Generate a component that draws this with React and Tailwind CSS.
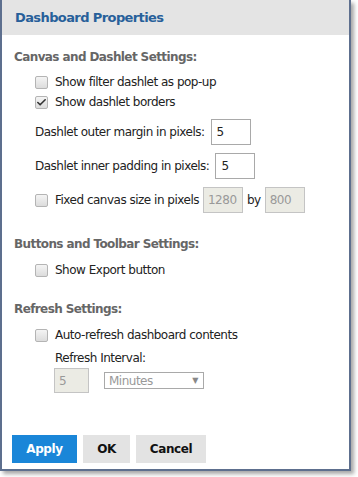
import { Check } from 'lucide-react';

const font = { fontFamily: '"DejaVu Sans", Tahoma, sans-serif' };

const Box = ({ checked }) => (
  <span className="w-[13px] h-[13px] rounded-[2px] border border-[#b4b4b4] bg-gradient-to-b from-[#f4f4f4] to-[#dcdcdc] flex items-center justify-center shrink-0">
    {checked && <Check size={11} strokeWidth={3.5} className="text-[#333]" />}
  </span>
);

const CheckRow = ({ label, checked, className = '' }) => (
  <div className={`flex items-center h-[20px] pl-[33px] ${className}`}>
    <Box checked={checked} />
    <span className="ml-[7px] text-[12px] tracking-[-0.5px] text-[#222]">{label}</span>
  </div>
);

const Heading = ({ children, className = '' }) => (
  <div className={`h-[20px] flex items-center pl-[12px] text-[12px] tracking-[-0.6px] font-bold text-[#666] ${className}`}>{children}</div>
);

const App = () => {
  return (
    <div className="w-[358px] h-[477px] bg-white" style={font}>
      <div className="w-[351px] border-x-2 border-b-2 border-[#5d6f8e] shadow-[3px_3px_4px_rgba(0,0,0,0.35)]">
        <div className="h-[35px] bg-[#e4e4e4] flex items-center pl-[13px] text-[13px] tracking-[-0.6px] font-bold text-[#27609a]">
          Dashboard Properties
        </div>
        <div className="bg-white pt-[12px] pb-[6px]">
          <Heading>Canvas and Dashlet Settings:</Heading>
          <CheckRow className="mt-[5px]" label="Show filter dashlet as pop-up" />
          <CheckRow label="Show dashlet borders" checked />

          <div className="flex items-center pl-[33px] mt-[7px] text-[12px] tracking-[-0.5px] text-[#222]">
            <span>Dashlet outer margin in pixels:</span>
            <input readOnly value="5" className="ml-[6px] w-[40px] h-[26px] border border-[#a9a9a9] px-[5px] text-[12px] outline-none" />
          </div>
          <div className="flex items-center pl-[33px] mt-[8px] text-[12px] tracking-[-0.5px] text-[#222]">
            <span>Dashlet inner padding in pixels:</span>
            <input readOnly value="5" className="ml-[6px] w-[40px] h-[26px] border border-[#a9a9a9] px-[5px] text-[12px] outline-none" />
          </div>
          <div className="flex items-center pl-[33px] mt-[8px] text-[12px] tracking-[-0.5px] text-[#222]">
            <Box />
            <span className="ml-[7px]">Fixed canvas size in pixels</span>
            <input readOnly disabled value="1280" className="ml-[4px] w-[40px] h-[26px] border border-[#c4c4c4] bg-[#ebebe4] px-[4px] text-[12px] text-[#999]" />
            <span className="mx-[4px]">by</span>
            <input readOnly disabled value="800" className="w-[40px] h-[26px] border border-[#c4c4c4] bg-[#ebebe4] px-[4px] text-[12px] text-[#999]" />
          </div>

          <Heading className="mt-[21px]">Buttons and Toolbar Settings:</Heading>
          <CheckRow className="mt-[6px]" label="Show Export button" />

          <Heading className="mt-[19px]">Refresh Settings:</Heading>
          <CheckRow className="mt-[6px]" label="Auto-refresh dashboard contents" />
          <div className="h-[20px] flex items-center pl-[53px] mt-[3px] text-[12px] tracking-[-0.5px] text-[#222]">Refresh Interval:</div>
          <div className="flex items-center pl-[52px]">
            <input readOnly disabled value="5" className="w-[35px] h-[25px] border border-[#c4c4c4] bg-[#ebebe4] px-[4px] text-[12px] text-[#999]" />
            <div className="ml-[15px] w-[100px] h-[17px] border border-[#a9a9a9] flex items-center justify-between pl-[4px] pr-[5px] text-[12px] tracking-[-0.5px] text-[#999]">
              <span>Minutes</span>
              <span className="text-[8px] text-[#888]">▼</span>
            </div>
          </div>

          <div className="flex gap-[6px] pl-[10px] mt-[42px]">
            <button className="w-[65px] h-[28px] bg-[#1a86d8] text-white text-[12px] tracking-[-0.4px] font-bold">Apply</button>
            <button className="w-[47px] h-[28px] bg-[#e3e3e3] text-[#111] text-[12px] tracking-[-0.4px] font-bold">OK</button>
            <button className="w-[70px] h-[28px] bg-[#e3e3e3] text-[#111] text-[12px] tracking-[-0.4px] font-bold">Cancel</button>
          </div>
        </div>
      </div>
    </div>
  );
};

export default App;
